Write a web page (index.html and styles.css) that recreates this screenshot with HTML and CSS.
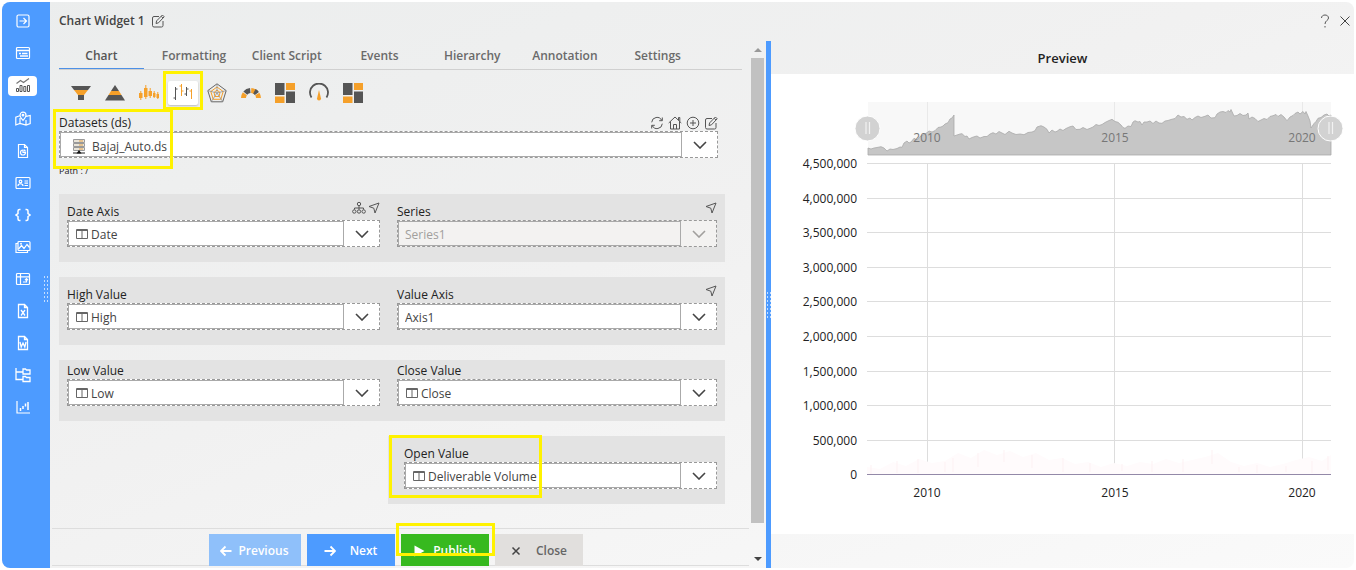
FILE: index.html
```html
<!DOCTYPE html>
<html lang="en">
<head>
<meta charset="utf-8">
<title>Chart Widget 1</title>
<link rel="stylesheet" href="styles.css">
</head>
<body>
<svg class="sprite" aria-hidden="true">
  <symbol id="col" viewBox="0 0 12 12"><path d="M.5 1.500h11v9H.5zM.5 2.500h11M6 2v8.500" fill="none" stroke="#666"/></symbol>
  <symbol id="chev" viewBox="0 0 14 8"><path d="M1 1l6 6 6-6" fill="none" stroke="currentColor" stroke-width="1.600"/></symbol>
  <symbol id="nav" viewBox="0 0 12 12"><path d="M1 4.500L11 1 7 11 5.800 6.200z" fill="none" stroke="#555"/></symbol>
  <symbol id="edit" viewBox="0 0 14 14"><path d="M8 2.500H3Q1.500 2.500 1.500 4v7.500Q1.500 13 3 13h7.500q1.500 0 1.500-1.500V7M5 9.500l.6-2.600L11.400 1 13.200 2.800 7.500 8.800zM10.200 2.300l1.700 1.700" fill="none" stroke="#555"/></symbol>
</svg>
<div class="window">
  <nav class="sidebar" aria-label="Widgets">
    <button aria-label="Collapse"><svg viewBox="0 0 16 16"><rect x="2" y="2" width="12" height="12" rx="1.500"/><path d="M4.500 8h7M8.500 5l3 3-3 3"/></svg></button>
    <button aria-label="Form"><svg viewBox="0 0 16 16"><rect x="1.500" y="2.500" width="13" height="11" rx="1"/><path d="M2 5.500h12M4 8.500h2M7 8.500h5.500M5 11h8" stroke-width="1.600"/></svg></button>
    <button class="current" aria-label="Chart"><svg viewBox="0 0 16 16"><path d="M1.500 5.500l4-3 3 2 5.500-4" stroke="#777"/><path d="M1.500 13.500v-3h2v3zM5 13.500v-6h2v6zM8.800 13.500v-5h2v5zM12.500 13.500v-6h2v6z" stroke="#555" stroke-width="1"/></svg></button>
    <button aria-label="Map"><svg viewBox="0 0 16 16"><path d="M5 5H4L.8 6.200V14L5 12.500l6 1.500 4.200-1.500V4.500l-4 .8M5 7v5.500M11 9v5M8 9.500C6 7 5 5.500 5 4.200a3 3 0 0 1 6 0C11 5.500 10 7 8 9.500z"/><circle cx="8" cy="4.200" r=".8"/></svg></button>
    <button aria-label="Report"><svg viewBox="0 0 16 16"><path d="M3.500 1.500h6l3 3v10h-9zM9.500 1.500v3h3"/><path d="M8 7a2.500 2.500 0 1 0 2.500 2.500H8zM9.500 6.500v1.500h1.500"/></svg></button>
    <button aria-label="Card"><svg viewBox="0 0 16 16"><rect x="1" y="2.500" width="14" height="11" rx="1"/><circle cx="5.500" cy="6.500" r="1.300"/><path d="M3 11c0-3 5-3 5 0M9.500 6h3.500M9.500 8.200h3.500M9.500 10.500h3.500"/></svg></button>
    <button aria-label="Code"><svg viewBox="0 0 16 16"><path d="M5.500 2.500H4.500Q3 2.500 3 4v2.500L1 8l2 1.500V12q0 1.500 1.500 1.500h1M10.500 2.500h1Q13 2.500 13 4v2.500L15 8l-2 1.500V12q0 1.500-1.500 1.500h-1" stroke-width="1.500"/></svg></button>
    <button aria-label="Image"><svg viewBox="0 0 16 16"><rect x="3" y="2.500" width="12" height="9" rx="1"/><path d="M3 4.500H1V13.500h11.500v-2M3.500 10l3-3.500 2.500 3 3-4 2.500 3"/><circle cx="6" cy="4.800" r=".4"/></svg></button>
    <button aria-label="Pivot table"><svg viewBox="0 0 16 16"><rect x="1.500" y="2.500" width="13" height="11" rx="1"/><path d="M2 5.800h12M5.500 3v10M8 11h3.500V8M10 9.200L11.500 7.700 13 9.200"/></svg></button>
    <button aria-label="Excel"><svg viewBox="0 0 16 16"><path d="M3.500 1.500h6l3 3v10h-9zM9.500 1.500v3h3M6 7l4 5.500M10 7l-4 5.500" stroke-width="1.300"/></svg></button>
    <button aria-label="Word"><svg viewBox="0 0 16 16"><path d="M3.500 1.500h6l3 3v10h-9zM9.500 1.500v3h3M5 7l1.200 5L8 8l1.800 4L11 7" stroke-width="1.300"/></svg></button>
    <button aria-label="Tree"><svg viewBox="0 0 16 16"><path d="M1 1v11.500h7M1 5h7M8 2h2.500l1 1H15v4H8zM8 9.500h2.500l1 1H15v4H8z" stroke-width="1.300"/></svg></button>
    <button aria-label="Candle chart"><svg viewBox="0 0 16 16"><path d="M2 2v12h13"/><path d="M5.500 9V12M8 7v3M10.500 4.500v3M13 3v8" stroke-width="1.500"/></svg></button>
    <span class="grip"></span>
  </nav>

  <div class="main">
    <header class="titlebar">
      <h1>Chart Widget 1</h1>
      <button class="plain" aria-label="Rename"><svg class="i14"><use href="#edit"/></svg></button>
      <span class="spacer"></span>
      <button class="plain" aria-label="Help"><svg class="i14" viewBox="0 0 14 14"><path d="M3.500 4c0-4 7-4 7 0C10.500 6.500 7 6.500 7 10M7 12v1.500" fill="none" stroke="#555"/></svg></button>
      <button class="plain" aria-label="Close dialog"><svg class="i14" viewBox="0 0 14 14"><path d="M2.500 2.500l9 9M11.500 2.500l-9 9" fill="none" stroke="#444"/></svg></button>
    </header>

    <div class="workspace">
      <section class="editor">
        <div class="content">
          <div class="tabs" role="tablist">
            <button role="tab" aria-selected="true">Chart</button>
            <button role="tab">Formatting</button>
            <button role="tab">Client Script</button>
            <button role="tab">Events</button>
            <button role="tab">Hierarchy</button>
            <button role="tab">Annotation</button>
            <button role="tab">Settings</button>
          </div>

          <div class="types">
            <button aria-label="Funnel"><svg viewBox="0 0 20 20"><path d="M0 3h20l-3 4H3z" fill="#555"/><path d="M3 7h14l-4 5H7z" fill="#f5a02a"/><path d="M7 12h6v5H7z" fill="#555"/></svg></button>
            <button aria-label="Pyramid"><svg viewBox="0 0 20 20"><path d="M10 2l4 6H6z" fill="#555"/><path d="M6 8h8l2.500 4h-13z" fill="#f5a02a"/><path d="M3.500 12h13l3.500 5.500H0z" fill="#555"/></svg></button>
            <button aria-label="Candlestick"><svg viewBox="0 0 20 20"><path d="M0 10h3.500v5H0zM5 5h3.500v9H5zM9.500 8H13v5H9.500zM14 10h2.500v4H14zM17.500 11H20v4h-2.500z" fill="#f5a02a"/><path d="M1.800 8v9M6.800 2v14M11.200 5v10M15.200 8v7M18.800 9v7" stroke="#f5a02a"/></svg></button>
            <button class="picked" aria-label="OHLC"><svg viewBox="0 0 20 20"><path d="M2.500 4v13M.5 15h2M2.500 6h2M13.500 4v9M11.500 11h2M13.500 6h2" fill="none" stroke="#555"/><path d="M8.500 1v12M6.500 3h2M8.500 8h2M18.500 6v10M16.500 8h2" fill="none" stroke="#f5a02a"/></svg><span class="mark mark-type"></span></button>
            <button aria-label="Radar"><svg viewBox="0 0 20 20"><path d="M10 .8l9.200 6.800-3.500 11.200H4.300L.8 7.600z" fill="none" stroke="#666"/><path d="M10 4l6.200 4.500-2.400 7.800H6.200L3.800 8.500zM10 7l3 2.500-1 4H8l-1-4z" fill="none" stroke="#f5a02a"/><path d="M10 1v9M19 7.600L10 10M15.700 18.500L10 10 4.300 18.500M1 7.600L10 10" fill="none" stroke="#888" stroke-width=".7"/></svg></button>
            <button aria-label="Semi doughnut"><svg viewBox="0 0 20 20"><g fill="none" stroke-width="5"><path d="M2.500 15a7.500 7.500 0 0 1 1.400-4.300" stroke="#f5a02a"/><path d="M4.300 10.200A7.500 7.500 0 0 1 9.300 7.500" stroke="#555"/><path d="M10.200 7.500a7.500 7.500 0 0 1 5 2.200" stroke="#f5a02a"/><path d="M13.400 8.300a7.500 7.500 0 0 1 2.500 2.200" stroke="#555"/><path d="M16.300 11a7.500 7.500 0 0 1 1.200 4" stroke="#f5a02a"/></g></svg></button>
            <button aria-label="Tree map"><svg viewBox="0 0 20 20"><path d="M0 0h9.500v12H0zM11 8.500h9V20h-9z" fill="#555"/><path d="M0 13.500h9.500V20H0zM11 0h9v7h-9z" fill="#f5a02a"/></svg></button>
            <button aria-label="Gauge"><svg viewBox="0 0 20 20"><path d="M2.500 14.500A9 9 0 1 1 17.500 14.500" fill="none" stroke="#555" stroke-width="1.800"/><path d="M10 7l2 8.500a2 2 0 1 1-4 0z" fill="#f5a02a"/></svg></button>
            <button aria-label="Heat map"><svg viewBox="0 0 20 20"><path d="M0 0h9.500v12H0zM11 8.500h9V20h-9z" fill="#555"/><path d="M0 13.500h9.500V20H0zM11 0h9v7h-9z" fill="#f5a02a"/></svg></button>
          </div>

          <div class="dataset">
            <div class="field">
              <div class="caption"><label for="ds">Datasets (ds)</label>
                <span class="tools">
                  <button class="plain" aria-label="Refresh"><svg class="i14" viewBox="0 0 14 14"><path d="M1.700 6.300A5.300 5.300 0 0 1 11.800 4.500M12.300 7.700A5.300 5.300 0 0 1 2.200 9.500M12.300 1.500v3.200H9.200M1.700 12.500V9.300h3.100" fill="none" stroke="#555"/></svg></button>
                  <button class="plain" aria-label="Home"><svg class="i14" viewBox="0 0 14 14"><path d="M.7 7L7 1l6.300 6M2.500 5.500V13h9V5.500M5.500 13V8.500h3V13M10.500 4V1.500h1.300v4" fill="none" stroke="#555"/></svg></button>
                  <button class="plain" aria-label="Add"><svg class="i14" viewBox="0 0 14 14"><circle cx="7" cy="7" r="5.800" fill="none" stroke="#555"/><path d="M7 4v6M4 7h6" stroke="#555"/></svg></button>
                  <button class="plain" aria-label="Edit"><svg class="i14"><use href="#edit"/></svg></button>
                </span>
              </div>
              <div class="combo has-server"><select id="ds"><option>Bajaj_Auto.ds</option></select><span class="frame"><svg class="server" viewBox="0 0 12 15"><path d="M.5.500h11v3H.5zM.5 4.500h11v3H.5zM.5 8.500h11v3H.5z" fill="#e9e4d8" stroke="#999"/><path d="M6 2h4M6 6h4M6 10h4" stroke="#e3a24a"/><path d="M0 14h12" stroke="#222"/><path d="M6 11l2.500 3.500h-5z" fill="#111"/></svg></span><svg class="chev"><use href="#chev"/></svg></div>
            </div>
            <p class="path">Path : /</p>
            <span class="mark mark-ds"></span>
          </div>

          <div class="cards">
            <div class="card">
              <div class="field">
                <div class="caption"><label for="date">Date Axis</label>
                  <span class="tools near">
                    <button class="plain" aria-label="Hierarchy levels"><svg class="i14" viewBox="0 0 14 14"><g fill="none" stroke="#555"><circle cx="7" cy="3" r="1.700"/><circle cx="2.300" cy="10.500" r="1.700"/><circle cx="7" cy="10.500" r="1.700"/><circle cx="11.700" cy="10.500" r="1.700"/><path d="M7 5v3.500M2.500 8.500V7h9v1.500"/></g></svg></button>
                    <button class="plain" aria-label="Date axis link"><svg class="i12"><use href="#nav"/></svg></button>
                  </span></div>
                <div class="combo has-col"><select id="date"><option>Date</option></select><span class="frame"><svg class="i12"><use href="#col"/></svg></span><svg class="chev"><use href="#chev"/></svg></div>
              </div>
              <div class="field">
                <div class="caption"><label for="series">Series</label><span class="tools near"><button class="plain" aria-label="Series link"><svg class="i12"><use href="#nav"/></svg></button></span></div>
                <div class="combo off"><select id="series" disabled><option>Series1</option></select><span class="frame"></span><svg class="chev"><use href="#chev"/></svg></div>
              </div>
            </div>
            <div class="card">
              <div class="field">
                <div class="caption"><label for="high">High Value</label></div>
                <div class="combo has-col"><select id="high"><option>High</option></select><span class="frame"><svg class="i12"><use href="#col"/></svg></span><svg class="chev"><use href="#chev"/></svg></div>
              </div>
              <div class="field">
                <div class="caption"><label for="axis">Value Axis</label><span class="tools near"><button class="plain" aria-label="Value axis link"><svg class="i12"><use href="#nav"/></svg></button></span></div>
                <div class="combo"><select id="axis"><option>Axis1</option></select><span class="frame"></span><svg class="chev"><use href="#chev"/></svg></div>
              </div>
            </div>
            <div class="card tight">
              <div class="field">
                <div class="caption"><label for="low">Low Value</label></div>
                <div class="combo has-col"><select id="low"><option>Low</option></select><span class="frame"><svg class="i12"><use href="#col"/></svg></span><svg class="chev"><use href="#chev"/></svg></div>
              </div>
              <div class="field">
                <div class="caption"><label for="close">Close Value</label></div>
                <div class="combo has-col"><select id="close"><option>Close</option></select><span class="frame"><svg class="i12"><use href="#col"/></svg></span><svg class="chev"><use href="#chev"/></svg></div>
              </div>
            </div>
            <div class="card half">
              <div class="field">
                <div class="caption"><label for="open">Open Value</label></div>
                <div class="combo has-col"><select id="open"><option>Deliverable Volume</option></select><span class="frame"><svg class="i12"><use href="#col"/></svg></span><svg class="chev"><use href="#chev"/></svg></div>
              </div>
              <span class="mark mark-open"></span>
            </div>
          </div>

          <footer class="actions">
            <button class="act prev"><svg class="i12" viewBox="0 0 12 12"><path d="M11.500 6H1M5.500 1.500L1 6l4.500 4.500" fill="none" stroke="#fff" stroke-width="1.800"/></svg>Previous</button>
            <button class="act next"><svg class="i12" viewBox="0 0 12 12"><path d="M.5 6H11M6.500 1.500L11 6l-4.500 4.500" fill="none" stroke="#fff" stroke-width="1.800"/></svg>Next</button>
            <button class="act publish"><svg class="i12" viewBox="0 0 12 12"><path d="M1.500.5L11.500 6l-10 5.500z" fill="#fff"/></svg>Publish<span class="mark mark-publish"></span></button>
            <button class="act dismiss"><svg class="i12" viewBox="0 0 12 12"><path d="M2.500 2.500l7 7M9.500 2.500l-7 7" stroke="#444" stroke-width="1.500"/></svg>Close</button>
          </footer>
        </div>
        <div class="scrollbar"><i class="up"></i><i class="thumb"></i><i class="down"></i></div>
      </section>

      <div class="splitter"><span class="grip"></span></div>

      <section class="preview">
        <h2>Preview</h2>
        <div class="stage">
          <svg class="chart" viewBox="771 74 583 460" role="img" aria-label="Price chart">
            <rect x="868" y="102" width="463" height="53" fill="#f8f8f8"/>
            <path d="M927.500 102v53M1114.500 102v53M1302.500 102v53" stroke="#e9e9e9"/>
            <path d="M868 155V148L871 149 874 148 877 147.500 881 146.700 884 148 887 151 890 149 893 149.500 897 148.500 900 147 902 147.300 904 143 907 141 909 143 911 142 914 138.300 917 140 920 136.500 923 135 927 132.700 929 131 932 132 935 130.700 938 127.500 941 127 943 126 945 124 948 122.700 950 119 952 118 954 115V136L957 135 960 134 962 133.700 965 136.500 967 136 969 139 972 137.500 975 136.500 977 136 980 138 984 136.500 987 136.500 990 134 993 132.700 996 134 999 131.500 1002 133 1005 134.500 1009 131.300 1012 133 1016 134.500 1020 134 1024 134.700 1028 132.500 1032 132 1035 130.700 1037 127 1041 125.700 1044 127 1047 129.300 1049 133 1052 130 1055 132 1057 131.300 1060 129 1063 130.500 1066 128.500 1070 126.700 1073 126 1076 129.500 1080 129.300 1083 127.500 1087 129.500 1090 128.300 1093 127 1096 124.500 1099 125.500 1102 124.500 1105 122.500 1108 121 1112 119.300 1115 121.500 1118 122.300 1121 125 1123 127.500 1125 128.300 1128 126 1131 126.500 1133 122 1135 120.700 1138 122 1140 121.500 1142 125 1144 122 1147 122 1150 121 1153 123.500 1156 121 1159 123 1162 123.300 1165 121 1168 120.500 1171 119.500 1175 118.500 1178 115 1181 117 1184 116.500 1187 119.300 1190 118 1192 120 1195 117.500 1198 116 1201 117.500 1205 116.300 1208 115 1211 118 1215 117.700 1217 114 1220 112 1223 111.500 1226 112.500 1228 110.500 1230 112 1231 109.500 1234 116 1237 115.500 1240 113.500 1243 115.500 1246 115 1248 113 1249 119 1252 117 1255 118.500 1258 121.500 1261 120 1264 118.500 1267 119.500 1270 116.500 1273 115.700 1276 114.500 1278 116.500 1281 114.500 1284 117 1287 120.700 1290 117 1293 115.500 1295 113.500 1298 112 1300 114 1303 111.500 1305 114 1306 111.500 1308 116 1310 121 1311 128 1314 123.500 1316 121.500 1318 118.300 1321 117.500 1324 115 1327 114 1329 116 1331 115V155z" fill="#c6c6c6" stroke="#aaa" stroke-width=".8"/>
            <g class="range-label"><text x="927" y="142">2010</text><text x="1115" y="142">2015</text><text x="1302" y="142">2020</text></g>
            <g fill="#d2d2d2" stroke="#fff"><circle cx="867.500" cy="128.500" r="12.500"/><circle cx="1330.500" cy="128.500" r="12.500"/></g>
            <path d="M866 122v12M869.500 122v12M1329 122v12M1332.500 122v12" stroke="#f2f2f2" stroke-width="1.200"/>
            <path d="M867 163.500h464M867 198.500h464M867 232.500h464M867 267.500h464M867 301.500h464M867 336.500h464M867 371.500h464M867 405.500h464M867 440.500h464M927.500 164v311M1114.500 164v311M1302.500 164v311" stroke="#ddd"/>
            <path d="M867 474V467L880 469 893 462 906 466 919 459 932 463 945 461 958 453 971 458 984 450 997 455 1010 451 1023 457 1036 453 1049 460 1062 458 1075 464 1088 462 1101 467 1114 463 1127 466 1140 462 1153 464 1166 459 1179 463 1192 460 1205 457 1218 453 1231 462 1244 466 1257 463 1270 467 1283 464 1296 460 1309 457 1322 461 1331 455V474z" fill="#fffbfc"/>
            <path d="M871 465v9M897 461v12M918 459v14M945 462v10M953 458v14M978 453v14M1004 450v12M1032 455v13M1063 458v14M1090 463v9M1122 464v7M1152 461v11M1183 459v13M1212 450v14M1239 467v5M1257 465v8M1286 466v6M1312 461v12M1328 456v14" stroke="#fdf1f3"/>
            <path d="M867 474.500h464" stroke="#9389a8"/>
            <g class="y-label"><text x="857" y="168">4,500,000</text><text x="857" y="203">4,000,000</text><text x="857" y="237">3,500,000</text><text x="857" y="272">3,000,000</text><text x="857" y="306">2,500,000</text><text x="857" y="341">2,000,000</text><text x="857" y="376">1,500,000</text><text x="857" y="410">1,000,000</text><text x="857" y="445">500,000</text><text x="857" y="479">0</text></g>
            <g class="x-label"><text x="927" y="497">2010</text><text x="1115" y="497">2015</text><text x="1302" y="497">2020</text></g>
          </svg>
        </div>
      </section>
    </div>
  </div>
</div>
</body>
</html>
```

FILE: styles.css
```css
* { box-sizing: border-box; }

body {
  margin: 0;
  padding: 2px;
  background: #fff;
  color: #222;
  font: 12px/16px "Open Sans", "Noto Sans", sans-serif;
}

button, select { font: inherit; color: inherit; border: 0; padding: 0; background: none; }
button { cursor: pointer; }
svg { display: block; }
.sprite { position: absolute; width: 0; height: 0; }
.i14 { width: 14px; height: 14px; }
.i12 { width: 12px; height: 12px; }

.window {
  display: grid;
  grid-template-columns: 48px minmax(0, 1fr);
  min-height: calc(100vh - 4px);
  border-radius: 8px;
  overflow: hidden;
  background: linear-gradient(to bottom right, #ebeded, #f1f1f1 45%, #fafafa);
}

.sidebar {
  position: relative;
  display: flex;
  flex-direction: column;
  align-items: center;
  gap: 14px;
  padding: 10px 7px 0 0;
  background: #4d9bff;
}
.sidebar button {
  display: grid;
  place-items: center;
  width: 29px;
  height: 18px;
  border-radius: 4px;
}
.sidebar .current { height: 20px; background: #fff; }
.sidebar svg { width: 16px; height: 16px; fill: none; stroke: #fff; stroke-width: 1.200; }

.grip {
  width: 6px;
  height: 28px;
  background: radial-gradient(circle, #c4deff 1px, transparent 1px) 0 0 / 3px 4px;
}
.sidebar .grip { position: absolute; right: 1px; top: 273px; }

.main { display: flex; flex-direction: column; }

.titlebar {
  display: flex;
  align-items: center;
  gap: 6px;
  height: 39px;
  padding: 0 2px 2px 9px;
}
.titlebar h1 { margin: 0; font-size: 12px; font-weight: 600; color: #444; }
.spacer { flex: 1; }

.workspace {
  flex: 1;
  display: grid;
  grid-template-columns: minmax(0, 716fr) 5px minmax(0, 583fr);
}

.editor { display: flex; }
.content { flex: 1; display: flex; flex-direction: column; min-width: 0; }

.tabs {
  display: grid;
  grid-template-columns: repeat(7, 1fr);
  gap: 8px;
  height: 29px;
  margin: 0 9px;
  padding-right: 42px;
  border-bottom: 1px solid #d0d0d0;
}
.tabs button { height: 28px; padding-top: 2px; font-weight: 600; color: #6a6a6a; white-space: nowrap; }
.tabs [aria-selected] { border-bottom: 1px solid #4d90e6; color: #555; }

.types { display: flex; gap: 4px; padding: 11px 16px 10px; }
.types button { position: relative; display: grid; place-items: center; width: 30px; height: 24px; }
.types svg { width: 20px; height: 20px; }
.types .picked { background: #fff; border-radius: 2px; box-shadow: 0 1px 2px #bbb; }

.mark { position: absolute; border: 3px solid #fff200; pointer-events: none; }
.mark-type { inset: -10px -5px -5px; }
.mark-ds { left: -6px; top: -6px; width: 120px; height: 60px; }
.mark-open { left: 1px; top: -1px; width: 153px; height: 63px; }
.mark-publish { inset: -11px -6px 10px -5px; }

.dataset { position: relative; margin: 0 33px 0 9px; }
.caption { display: flex; justify-content: space-between; height: 16px; }
.tools { display: flex; align-items: center; gap: 4px; }
.near { gap: 2px; height: 8px; }

.combo {
  display: grid;
  grid-template-columns: minmax(0, 1fr) 35px;
  height: 27px;
  border: 1px dashed #999;
  background: #fff;
  color: #444;
}
.combo select {
  grid-area: 1 / 1 / 2 / 3;
  appearance: none;
  width: 100%;
  padding: 2px 0 0 7px;
  opacity: 1;
}
.combo .frame {
  grid-area: 1 / 1;
  display: flex;
  align-items: center;
  padding-left: 7px;
  border: 1px solid #aaa;
  pointer-events: none;
}
.combo .chev {
  grid-area: 1 / 2;
  place-self: center;
  width: 14px;
  height: 8px;
  pointer-events: none;
}
.has-col select { padding-left: 23px; }
.has-server select { padding-left: 32px; padding-top: 4px; }
.has-server .frame { padding-left: 12px; padding-top: 4px; }
.server { width: 12px; height: 15px; }
.off { background: #f3f2f1; color: #a19f9d; }

.path { margin: 5px 0 0; font-size: 9px; }

.cards { display: grid; gap: 15px; margin: 15px 26px 24px 9px; }
.card {
  display: grid;
  grid-template-columns: 313fr 320fr;
  gap: 17px;
  padding: 10px 8px 15px;
  background: #e3e3e3;
}
.tight { padding-top: 3px; }
.half {
  position: relative;
  grid-template-columns: 1fr;
  margin-left: 329px;
  padding-left: 16px;
}

.actions {
  display: flex;
  justify-content: center;
  gap: 6px;
  height: 38px;
  margin: auto 2px 2px;
  padding: 5px 10px 0 0;
  border: solid #ddd;
  border-width: 1px 0;
}
.act {
  position: relative;
  display: flex;
  align-items: center;
  justify-content: center;
  min-width: 88px;
  height: 32px;
  padding-top: 2px;
  color: #fff;
  font-weight: 600;
  gap: 14px;
}
.prev { gap: 6px; min-width: 92px; background: #8fc0fa; }
.next { background: #4d9bff; }
.publish { gap: 8px; background: #37b91f; }
.dismiss { background: #e1dfdd; color: #666; }

.scrollbar {
  display: flex;
  flex-direction: column;
  align-items: center;
  width: 15px;
  padding: 7px 2px 7px 0;
}
.up, .down { border: solid transparent; border-width: 0 4px; }
.up { border-bottom: 4px solid #999; }
.down { border-top: 4px solid #444; }
.thumb { flex: 1; width: 13px; margin: 6px 0 34px; background: #c1c1c1; }

.splitter { display: grid; place-items: center; background: #4d9bff; }

.preview { display: flex; flex-direction: column; }
.preview h2 {
  margin: 0;
  padding: 9px 0 8px;
  text-align: center;
  font-size: 13px;
  line-height: 16px;
  font-weight: 600;
}
.stage { background: #fff; margin-bottom: 34px; }
.chart { width: 100%; height: auto; }
.chart text { font-size: 12px; fill: #222; }
.chart .range-label text { fill: #777; }
.x-label, .range-label { text-anchor: middle; }
.y-label { text-anchor: end; }
```
